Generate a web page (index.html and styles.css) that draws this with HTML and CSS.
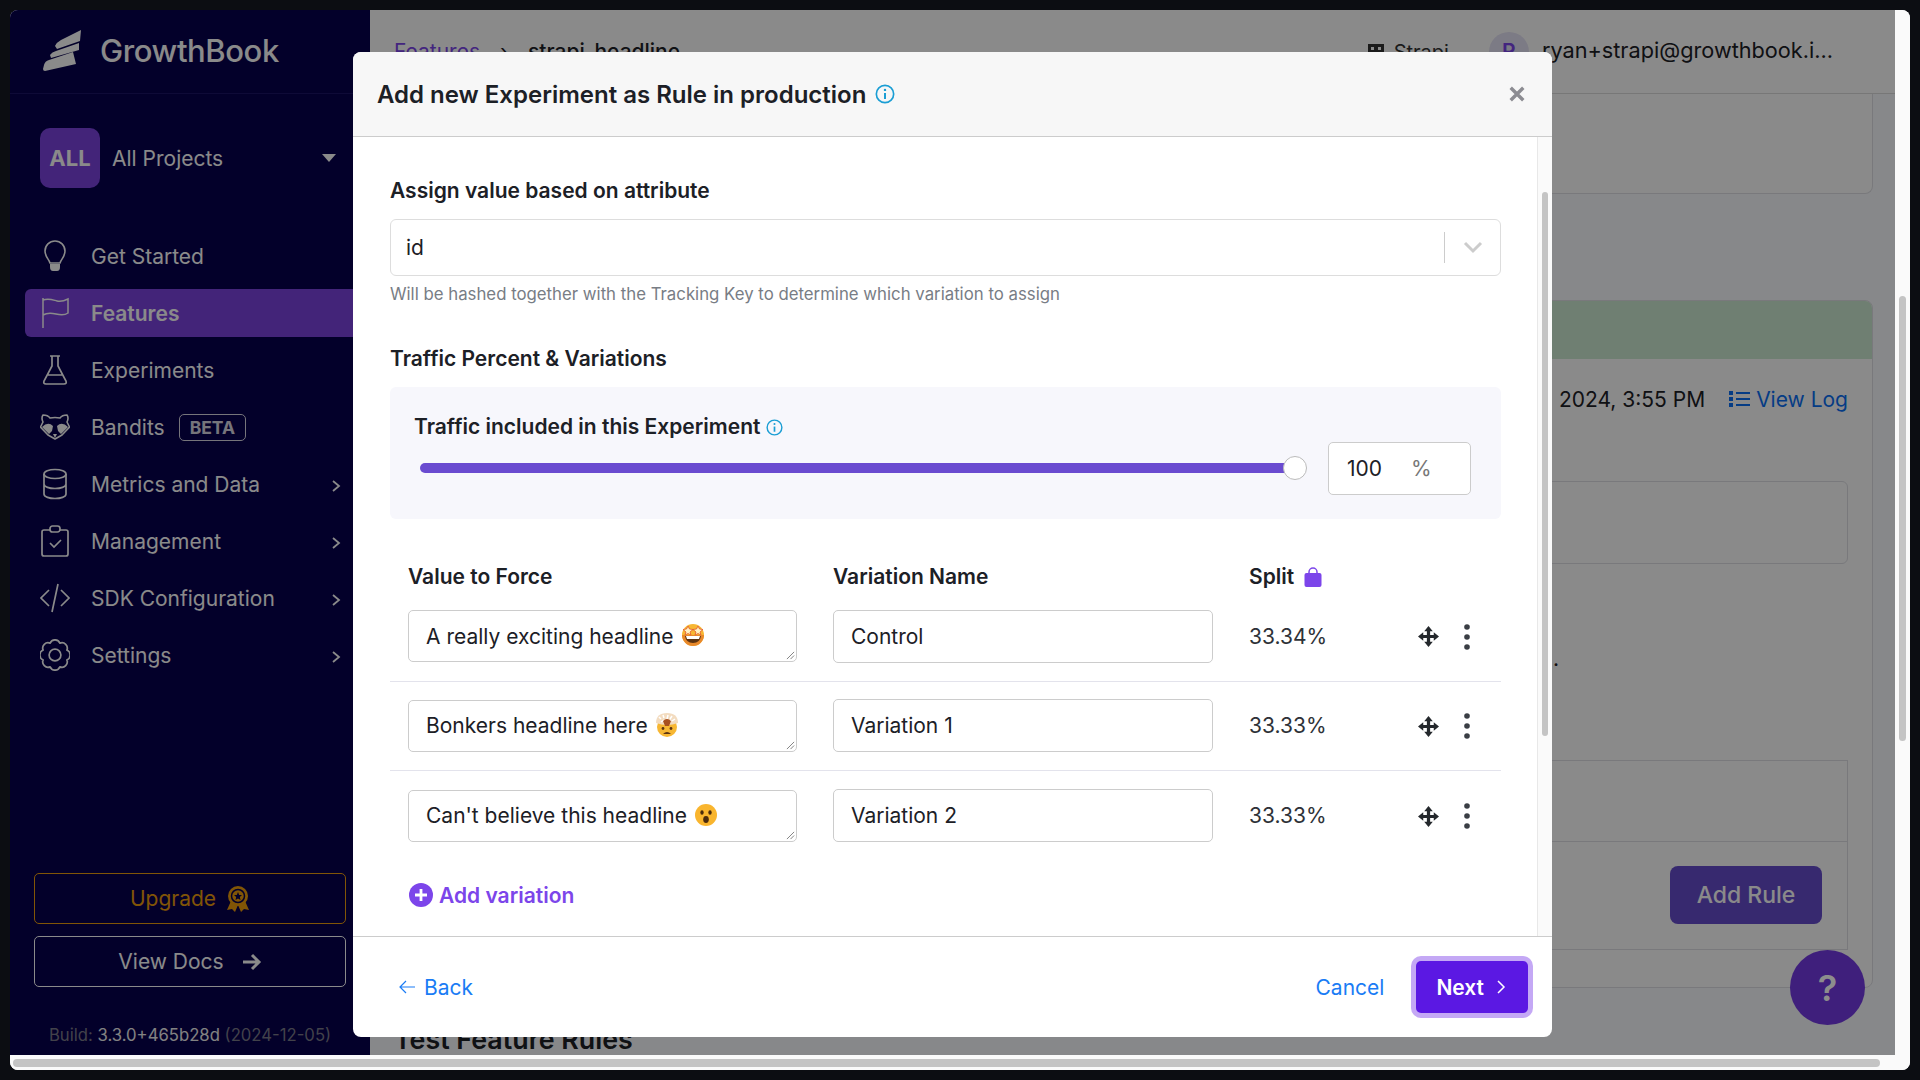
FILE: index.html
```html
<!DOCTYPE html>
<html>
	<head>
		<meta charset="UTF-8">
		<title>Features - GrowthBook</title>
		<link rel="stylesheet" href="styles.css">
	</head>
	<body>
		<div class="window">
			<div class="viewport">
				<aside class="sidebar">
					<div class="logo">
						<svg width="40" height="42" viewBox="0 0 40 42"><path d="M38 0 L37 11 L14 19 L12 16 Q14 12 18 10 Z M36 13 L36 20 L8 28 L7 25 Q9 22 13 21 Z M30 22 L33 34 L2 41 Q0 41 0 39 L1 35 Q2 31 6 30 Z" fill="currentColor"/></svg>
						<span>GrowthBook</span>
					</div>
					<div class="project">
						<div class="project-badge">ALL</div>
						<span>All Projects</span>
						<i class="caret"></i>
					</div>
					<nav class="nav">
						<a class="nav-item">
							<svg class="nav-icon" viewBox="0 0 28 32"><path d="M9 23 C8 19 4 17 4 11 A10 10 0 0 1 24 11 C24 17 20 19 19 23 Z" fill="none" stroke="currentColor" stroke-width="1.6"/><path d="M9 24 H19 V27 Q19 31 16 31 H12 Q9 31 9 27 Z" fill="currentColor"/></svg>
							<span>Get Started</span>
						</a>
						<a class="nav-item active">
							<svg class="nav-icon" viewBox="0 0 28 32"><path d="M2 1 V31 M2 3 C8 1 12 3 16 4 C20 5 23 4 27 2 V16 C23 19 19 18 15 17 C11 16 7 15 2 18" fill="none" stroke="currentColor" stroke-width="1.5"/></svg>
							<span>Features</span>
						</a>
						<a class="nav-item">
							<svg class="nav-icon" viewBox="0 0 28 32"><path d="M9 2 H19 M11 2 V12 L3 27 Q2 30 5 30 H23 Q26 30 25 27 L17 12 V2 M7 21 H21" fill="none" stroke="currentColor" stroke-width="1.7"/></svg>
							<span>Experiments</span>
						</a>
						<a class="nav-item">
							<svg class="nav-icon" viewBox="0 0 30 26"><path d="M3 1 Q8 1 10 4 Q15 3 20 4 Q22 1 27 1 Q29 4 27 8 L29.500 13 L22 21 L15 25 L8 21 L0.500 13 L3 8 Q1 4 3 1 Z" fill="none" stroke="currentColor" stroke-width="1.600" stroke-linejoin="round"/><path d="M2 13 Q8 7 13 12 L12 17 L9 20 Z M28 13 Q22 7 17 12 L18 17 L21 20 Z M13 20 H17 L15 24 Z" fill="currentColor"/></svg>
							<span>Bandits</span>
							<em class="beta">BETA</em>
						</a>
						<a class="nav-item">
							<svg class="nav-icon" viewBox="0 0 28 32"><ellipse cx="14" cy="6" rx="11" ry="4.5" fill="none" stroke="currentColor" stroke-width="1.7"/><path d="M3 6 V26 C3 32 25 32 25 26 V6 M3 16 C3 22 25 22 25 16" fill="none" stroke="currentColor" stroke-width="1.7"/></svg>
							<span>Metrics and Data</span>
							<svg class="nav-chevron" viewBox="0 0 10 14"><path d="M2 2 L8 7 L2 12" fill="none" stroke="currentColor" stroke-width="1.8"/></svg>
						</a>
						<a class="nav-item">
							<svg class="nav-icon" viewBox="0 0 28 32"><path d="M9 5 H3 Q1 5 1 7 V29 Q1 31 3 31 H25 Q27 31 27 29 V7 Q27 5 25 5 H19" fill="none" stroke="currentColor" stroke-width="1.7"/><rect x="9" y="1" width="10" height="6" rx="2.5" fill="none" stroke="currentColor" stroke-width="1.7"/><path d="M9 18 L13 22 L20 15" fill="none" stroke="currentColor" stroke-width="1.7"/></svg>
							<span>Management</span>
							<svg class="nav-chevron" viewBox="0 0 10 14"><path d="M2 2 L8 7 L2 12" fill="none" stroke="currentColor" stroke-width="1.8"/></svg>
						</a>
						<a class="nav-item">
							<svg class="nav-icon" viewBox="0 0 30 28"><path d="M9 6 L1 14 L9 22 M21 6 L29 14 L21 22 M18 0 L12 28" fill="none" stroke="currentColor" stroke-width="1.7"/></svg>
							<span>SDK Configuration</span>
							<svg class="nav-chevron" viewBox="0 0 10 14"><path d="M2 2 L8 7 L2 12" fill="none" stroke="currentColor" stroke-width="1.8"/></svg>
						</a>
						<a class="nav-item">
							<svg class="nav-icon" viewBox="0 0 28 28"><circle cx="14" cy="14" r="5.5" fill="none" stroke="currentColor" stroke-width="1.6"/><path d="M9.400 2.900 A5 5 0 0 1 18.600 2.900 A5 5 0 0 1 25.100 9.400 A5 5 0 0 1 25.100 18.600 A5 5 0 0 1 18.600 25.100 A5 5 0 0 1 9.400 25.100 A5 5 0 0 1 2.900 18.600 A5 5 0 0 1 2.900 9.400 A5 5 0 0 1 9.400 2.900 Z" fill="none" stroke="currentColor" stroke-width="1.6" stroke-linejoin="round"/></svg>
							<span>Settings</span>
							<svg class="nav-chevron" viewBox="0 0 10 14"><path d="M2 2 L8 7 L2 12" fill="none" stroke="currentColor" stroke-width="1.8"/></svg>
						</a>
					</nav>
					<div class="side-bottom">
						<a class="side-btn upgrade">
							Upgrade
							<svg width="24" height="28" viewBox="0 0 24 28"><path d="M5 16 L1 25 L6 24 L9 27 L12 20 L15 27 L18 24 L23 25 L19 16 Z" fill="currentColor"/><circle cx="12" cy="11" r="10" fill="currentColor"/><circle cx="12" cy="11" r="6.500" fill="none" stroke="#07004e" stroke-width="1.500"/><path d="M12 7 L13.200 10 L16 10 L13.800 12 L14.500 15 L12 13.500 L9.500 15 L10.200 12 L8 10 L10.800 10 Z" fill="#07004e"/></svg>
						</a>
						<a class="side-btn docs">
							View Docs
							<svg width="20" height="18" viewBox="0 0 20 18"><path d="M1 9 H17 M10 2 L17 9 L10 16" fill="none" stroke="currentColor" stroke-width="3"/></svg>
						</a>
						<div class="build">Build: <b>3.3.0+465b28d</b> (2024-12-05)</div>
					</div>
				</aside>

				<main class="content">
					<header class="topbar">
						<div class="crumbs"><a>Features</a><span class="crumb-sep">&rsaquo;</span><strong>strapi-headline</strong></div>
						<div class="org">
							<svg width="16" height="16" viewBox="0 0 16 16"><path d="M0 0 H16 V16 H0 Z M3 3 V6 H6 V3 Z M10 3 V6 H13 V3 Z M3 9 V12 H6 V9 Z M10 9 V12 H13 V9 Z" fill="currentColor" fill-rule="evenodd"/></svg>
							Strapi
						</div>
						<div class="avatar">R</div>
						<div class="user">ryan+strapi@growthbook.i...</div>
					</header>
					<div class="page-body">
						<section class="card card-top"></section>
						<section class="card card-env">
							<div class="env-head"></div>
							<div class="env-body">
								<div class="log-row">
									<span>2024, 3:55 PM</span>
									<a class="view-log">
										<svg width="21" height="18" viewBox="0 0 21 18"><path d="M0 1 H4 V5 H0 Z M0 7 H4 V11 H0 Z M0 13 H4 V17 H0 Z M7 2 H21 V4 H7 Z M7 8 H21 V10 H7 Z M7 14 H21 V16 H7 Z" fill="currentColor"/></svg>
										View Log
									</a>
								</div>
								<div class="env-box"></div>
								<div class="stray-dot">.</div>
								<div class="rules-box">
									<div class="rules-top"></div>
									<div class="rules-foot"><a class="add-rule">Add Rule</a></div>
								</div>
							</div>
						</section>
						<h2 class="test-title">Test Feature Rules</h2>
					</div>
				</main>

				<div class="backdrop"></div>
				<a class="help-fab">?</a>

				<div class="modal">
					<div class="modal-head">
						<h4>Add new Experiment as Rule in production</h4>
						<svg class="info big" viewBox="0 0 18 18"><circle cx="9" cy="9" r="7.800" fill="none" stroke="currentColor" stroke-width="1.500"/><circle cx="9" cy="5.300" r="1.100" fill="currentColor"/><path d="M9 8 V13.500" stroke="currentColor" stroke-width="1.800"/></svg>
						<svg class="modal-close" viewBox="0 0 14 14"><path d="M1.500 1.500 L12.500 12.500 M12.500 1.500 L1.500 12.500" stroke="currentColor" stroke-width="3"/></svg>
					</div>
					<div class="modal-scroll">
						<div class="modal-body">
							<label class="field-label">Assign value based on attribute</label>
							<div class="select">
								<span>id</span>
								<i class="select-sep"></i>
								<svg width="20" height="13" viewBox="0 0 20 13"><path d="M2 2 L10 10 L18 2" fill="none" stroke="#ccc" stroke-width="3"/></svg>
							</div>
							<p class="hint">Will be hashed together with the Tracking Key to determine which variation to assign</p>

							<label class="field-label traffic-label">Traffic Percent &amp; Variations</label>
							<div class="traffic">
								<div class="traffic-title">
									Traffic included in this Experiment
									<svg class="info" viewBox="0 0 18 18"><circle cx="9" cy="9" r="7.800" fill="none" stroke="currentColor" stroke-width="1.500"/><circle cx="9" cy="5.300" r="1.100" fill="currentColor"/><path d="M9 8 V13.500" stroke="currentColor" stroke-width="1.800"/></svg>
								</div>
								<div class="traffic-row">
									<div class="slider"><i class="slider-thumb"></i></div>
									<div class="percent-input"><span>100</span><em>%</em></div>
								</div>
							</div>

							<div class="var-head var-grid">
								<span>Value to Force</span>
								<span>Variation Name</span>
								<span class="split-head">Split
									<svg width="18" height="20" viewBox="0 0 18 20"><path d="M5 8 V5 A4 4 0 0 1 13 5 V8" fill="none" stroke="#7c45ea" stroke-width="1.500"/><rect x="0.500" y="6" width="17" height="14" rx="2" fill="#7c45ea"/></svg>
								</span>
							</div>

							<div class="var-row var-grid">
								<div class="text-box">A really exciting headline
									<svg class="emoji" viewBox="0 0 24 24"><circle cx="12" cy="12" r="11" fill="#f7b733"/><path d="M1 12 A11 11 0 0 0 23 12 Z" fill="#e8892b"/><path d="M4 13 H20 Q19 20 12 20 Q5 20 4 13 Z" fill="#5c3310"/><path d="M5 13 H19 L18 16 H6 Z" fill="#fff"/><path d="M7 3 L8.500 6 L12 6.500 L9 9 L10 12 L7 10.500 L4 12 L5 9 L2 6.500 L5.500 6 Z M17 3 L18.500 6 L22 6.500 L19 9 L20 12 L17 10.500 L14 12 L15 9 L12 6.500 L15.500 6 Z" fill="#fff3c4" stroke="#e2572b" stroke-width=".8"/></svg>
									<svg class="grip" viewBox="0 0 10 10"><path d="M9 1 L1 9 M9 5 L5 9" stroke="#777" stroke-width="1"/></svg>
								</div>
								<div class="text-input">Control</div>
								<div class="split-val">33.34%</div>
								<div class="var-actions">
									<svg class="move" viewBox="0 0 22 22"><path d="M11 0 L15.500 5.500 H12.700 V9.300 H16.500 V6.500 L22 11 L16.500 15.500 V12.700 H12.700 V16.500 H15.500 L11 22 L6.500 16.500 H9.300 V12.700 H5.500 V15.500 L0 11 L5.500 6.500 V9.300 H9.300 V5.500 H6.500 Z" fill="currentColor"/></svg>
									<svg class="kebab" viewBox="0 0 6 26"><circle cx="3" cy="3" r="2.800"/><circle cx="3" cy="13" r="2.800"/><circle cx="3" cy="23" r="2.800"/></svg>
								</div>
							</div>
							<div class="var-row var-grid">
								<div class="text-box">Bonkers headline here
									<svg class="emoji" viewBox="0 0 24 24"><circle cx="12" cy="14" r="10" fill="#f7b733"/><path d="M1 10 Q1 0 12 0 Q23 0 23 10 Q12 14 1 10 Z" fill="#f3dcc0"/><path d="M4 4 L6 6 M8 2 L9 5 M13 2 L12 6 M17 3 L15 6 M20 6 L17 8 M6 9 L9 7 M14 9 L16 7" stroke="#fff" stroke-width="1.500"/><path d="M8 8 Q12 4 16 8 L14 13 H10 Z" fill="#a8501f"/><circle cx="8" cy="15.500" r="1.400" fill="#5c3310"/><circle cx="16" cy="15.500" r="1.400" fill="#5c3310"/><path d="M8 21 Q12 17 16 21 Z" fill="#5c3310"/></svg>
									<svg class="grip" viewBox="0 0 10 10"><path d="M9 1 L1 9 M9 5 L5 9" stroke="#777" stroke-width="1"/></svg>
								</div>
								<div class="text-input">Variation 1</div>
								<div class="split-val">33.33%</div>
								<div class="var-actions">
									<svg class="move" viewBox="0 0 22 22"><path d="M11 0 L15.500 5.500 H12.700 V9.300 H16.500 V6.500 L22 11 L16.500 15.500 V12.700 H12.700 V16.500 H15.500 L11 22 L6.500 16.500 H9.300 V12.700 H5.500 V15.500 L0 11 L5.500 6.500 V9.300 H9.300 V5.500 H6.500 Z" fill="currentColor"/></svg>
									<svg class="kebab" viewBox="0 0 6 26"><circle cx="3" cy="3" r="2.800"/><circle cx="3" cy="13" r="2.800"/><circle cx="3" cy="23" r="2.800"/></svg>
								</div>
							</div>
							<div class="var-row var-grid last">
								<div class="text-box">Can't believe this headline
									<svg class="emoji" viewBox="0 0 24 24"><circle cx="12" cy="12" r="11" fill="#f9b52e"/><ellipse cx="8" cy="9.500" rx="1.700" ry="2.200" fill="#4a2a0c"/><ellipse cx="16" cy="9.500" rx="1.700" ry="2.200" fill="#4a2a0c"/><ellipse cx="12" cy="16.500" rx="2.800" ry="3.400" fill="#4a2a0c"/></svg>
									<svg class="grip" viewBox="0 0 10 10"><path d="M9 1 L1 9 M9 5 L5 9" stroke="#777" stroke-width="1"/></svg>
								</div>
								<div class="text-input">Variation 2</div>
								<div class="split-val">33.33%</div>
								<div class="var-actions">
									<svg class="move" viewBox="0 0 22 22"><path d="M11 0 L15.500 5.500 H12.700 V9.300 H16.500 V6.500 L22 11 L16.500 15.500 V12.700 H12.700 V16.500 H15.500 L11 22 L6.500 16.500 H9.300 V12.700 H5.500 V15.500 L0 11 L5.500 6.500 V9.300 H9.300 V5.500 H6.500 Z" fill="currentColor"/></svg>
									<svg class="kebab" viewBox="0 0 6 26"><circle cx="3" cy="3" r="2.800"/><circle cx="3" cy="13" r="2.800"/><circle cx="3" cy="23" r="2.800"/></svg>
								</div>
							</div>
							<a class="add-variation">
								<svg width="24" height="24" viewBox="0 0 24 24"><circle cx="12" cy="12" r="12" fill="#7c45ea"/><path d="M12 6 V18 M6 12 H18" stroke="#fff" stroke-width="2.800"/></svg>
								Add variation
							</a>
						</div>
						<div class="modal-track"><i></i></div>
					</div>
					<div class="modal-foot">
						<a class="back">
							<svg width="16" height="14" viewBox="0 0 16 14"><path d="M7 1 L1 7 L7 13 M1 7 H16" fill="none" stroke="currentColor" stroke-width="1.200"/></svg>
							Back
						</a>
						<a class="cancel">Cancel</a>
						<a class="next">Next
							<svg width="10" height="16" viewBox="0 0 10 16"><path d="M2 2 L8 8 L2 14" fill="none" stroke="currentColor" stroke-width="1.500"/></svg>
						</a>
					</div>
				</div>
			</div>
			<div class="vscroll"><i></i></div>
			<div class="hscroll"><i></i></div>
			<div class="corner"></div>
		</div>
	</body>
</html>
```

FILE: styles.css
```css
*{
	box-sizing: border-box;
}
html,body{
	margin: 0;
	height: 100%;
}
body{
	width: 1920px;
	height: 1080px;
	padding: 10px;
	background: #0c0d12;
	font-family: Inter, "Liberation Sans", sans-serif;
	font-size: 21px;
	color: #1c2026;
	overflow: hidden;
}
a{
	cursor: pointer;
}
.window{
	display: grid;
	grid-template-columns: 1fr 15px;
	grid-template-rows: 1fr 15px;
	height: 100%;
	background: #fafafa;
	border-radius: 8px;
	overflow: hidden;
}
.viewport{
	position: relative;
	display: flex;
	overflow: hidden;
}

/* sidebar */
.sidebar{
	display: flex;
	flex-direction: column;
	flex: 0 0 360px;
	background: #07004e;
	color: #fff;
}
.logo{
	display: flex;
	align-items: center;
	gap: 17px;
	height: 84px;
	padding: 0 0 2px 33px;
	border-bottom: 1px solid #1a1466;
	font-size: 31px;
	font-weight: 500;
	letter-spacing: -.4px;
}
.project{
	display: flex;
	align-items: center;
	gap: 12px;
	padding: 34px 20px 0 30px;
}
.project-badge{
	display: flex;
	align-items: center;
	justify-content: center;
	width: 60px;
	height: 60px;
	border-radius: 10px;
	background: #7c43e0;
	font-size: 22px;
	font-weight: 700;
}
.caret{
	margin-left: auto;
	margin-right: 14px;
	border: 7px solid transparent;
	border-top: 8px solid #fff;
	border-bottom: 0;
}
.nav{
	display: flex;
	flex-direction: column;
	gap: 9px;
	margin-top: 44px;
	padding-left: 15px;
}
.nav-item{
	display: flex;
	align-items: center;
	gap: 21px;
	height: 48px;
	padding: 0 29px 0 15px;
	border-radius: 6px 0 0 6px;
}
.nav-item.active{
	background: #7c43e0;
	font-weight: 600;
}
.nav-icon{
	flex: 0 0 auto;
	width: 30px;
	height: 32px;
}
.nav-chevron{
	width: 10px;
	height: 14px;
	margin-left: auto;
	margin-top: 3px;
}
.beta{
	margin-left: -7px;
	padding: 2px 10px;
	border: 1px solid #fff;
	border-radius: 5px;
	font-style: normal;
	font-size: 17.500px;
	font-weight: 700;
	opacity: .85;
}
.side-bottom{
	display: flex;
	flex-direction: column;
	margin-top: auto;
	padding: 0 24px 0 24px;
}
.side-btn{
	display: flex;
	align-items: center;
	justify-content: center;
	gap: 10px;
	height: 51px;
	border: 1px solid currentColor;
	border-radius: 5px;
	margin-top: 12px;
}
.upgrade{
	color: #ee9d0c;
}
.docs{
	gap: 18px;
}
.build{
	margin: 38px 0 10px;
	text-align: center;
	font-size: 16.700px;
	color: #7a7a8a;
	white-space: nowrap;
}
.build b{
	font-weight: 400;
	color: #f0f0f0;
}

/* page under the dialog */
.content{
	flex: 1;
	min-width: 0;
	background: #fafbff;
}
.topbar{
	display: flex;
	align-items: center;
	height: 84px;
	padding: 0 62px 0 24px;
	background: #fff;
	border-bottom: 1px solid #ddd;
}
.crumbs{
	display: flex;
	align-items: center;
	gap: 20px;
	margin-right: auto;
}
.crumbs a{
	color: #7c45ea;
}
.crumbs strong{
	font-weight: 500;
}
.org{
	display: flex;
	align-items: center;
	gap: 10px;
	margin-right: 40px;
	font-size: 20px;
	color: #333;
}
.avatar{
	display: flex;
	align-items: center;
	justify-content: center;
	width: 40px;
	height: 40px;
	margin-right: 13px;
	border-radius: 50%;
	background: #e6e3f5;
	color: #7c45ea;
	font-weight: 600;
}
.user{
	margin-bottom: 4px;
	font-size: 21.700px;
	white-space: nowrap;
}
.page-body{
	padding: 0 22px 0 24px;
}
.card{
	background: #fff;
	border: 1px solid #dfe0e5;
	border-radius: 8px;
}
.card-top{
	height: 100px;
	border-top: 0;
	border-radius: 0 0 8px 8px;
}
.card-env{
	height: 688px;
	margin-top: 106px;
	overflow: hidden;
}
.env-head{
	height: 58px;
	background: #cdebd3;
}
.env-body{
	padding: 0 24px;
}
.log-row{
	display: flex;
	align-items: center;
	justify-content: flex-end;
	gap: 24px;
	height: 80px;
}
.view-log{
	display: flex;
	align-items: center;
	gap: 6px;
	color: #0a6ff5;
}
.env-box{
	height: 83px;
	margin-top: 42px;
	border: 1px solid #dfe0e5;
	border-radius: 6px;
}
.stray-dot{
	height: 196px;
	padding: 84px 0 0 1134px;
	line-height: 1;
}
.rules-box{
	height: 190px;
	border: 1px solid #dfe0e5;
}
.rules-top{
	height: 81px;
	border-bottom: 1px solid #dfe0e5;
}
.rules-foot{
	display: flex;
	justify-content: flex-end;
	padding: 24px 25px 0 0;
}
.add-rule{
	display: flex;
	align-items: center;
	justify-content: center;
	width: 152px;
	height: 58px;
	border-radius: 8px;
	background: #664ccd;
	color: #fff;
	font-size: 23px;
	font-weight: 500;
}
.test-title{
	margin: 35px 0 0;
	font-size: 26.800px;
	font-weight: 600;
}
.backdrop{
	position: absolute;
	inset: 0;
	background: rgba(0,0,0,.46);
}
.help-fab{
	position: absolute;
	left: 1780px;
	top: 940px;
	display: flex;
	align-items: center;
	justify-content: center;
	width: 75px;
	height: 75px;
	border-radius: 50%;
	background: #3f1f7c;
	color: #8d8d8d;
	font-size: 36px;
	font-weight: 600;
}

/* dialog */
.modal{
	position: absolute;
	left: 343px;
	top: 42px;
	display: flex;
	flex-direction: column;
	width: 1199px;
	height: 985px;
	background: #fff;
	border-radius: 8px;
	overflow: hidden;
}
.modal-head{
	display: flex;
	align-items: center;
	height: 85px;
	padding: 0 27px 0 24px;
	background: #f7f7f7;
	border-bottom: 1px solid #ccc;
}
.modal-head h4{
	margin: 0;
	font-size: 24px;
	font-weight: 600;
}
.info{
	width: 17px;
	height: 17px;
	margin-left: 6px;
	color: #1b9ed4;
}
.info.big{
	width: 20px;
	height: 20px;
	margin-left: 9px;
}
.modal-close{
	width: 16px;
	height: 16px;
	margin-left: auto;
	color: #8c8c92;
}
.modal-scroll{
	display: flex;
	flex: 1;
	min-height: 0;
}
.modal-body{
	flex: 1;
	padding: 39px 36px 0 37px;
}
.modal-track{
	flex: 0 0 15px;
	padding: 55px 4px 0 4px;
	background: #fafafa;
	border-left: 1px solid #e8e8e8;
}
.modal-track i{
	display: block;
	height: 544px;
	background: #c4c4c4;
	border-radius: 4px;
}
.field-label{
	display: block;
	font-weight: 600;
	line-height: 30px;
}
.select{
	display: flex;
	align-items: center;
	height: 57px;
	margin-top: 13px;
	padding: 0 17px 0 15px;
	border: 1px solid #ddd;
	border-radius: 6px;
}
.select-sep{
	width: 1px;
	height: 31px;
	margin-left: auto;
	margin-right: 18px;
	background: #ccc;
}
.hint{
	margin: 8px 0 0;
	font-size: 16.800px;
	line-height: 20px;
	color: #787d85;
}
.traffic-label{
	margin-top: 40px;
}
.traffic{
	height: 132px;
	margin-top: 13px;
	padding: 25px 30px 0 24px;
	background: #f7f7fc;
	border-radius: 6px;
}
.traffic-title{
	display: flex;
	align-items: center;
	font-weight: 600;
	line-height: 30px;
}
.traffic-row{
	display: flex;
	align-items: center;
}
.slider{
	position: relative;
	flex: 1;
	height: 10px;
	margin: 0 33px 2px 6px;
	border-radius: 5px;
	background: #6a4bd0;
}
.slider-thumb{
	position: absolute;
	right: -12px;
	top: -7px;
	width: 24px;
	height: 24px;
	border-radius: 50%;
	background: #fff;
	border: 1px solid #bbb;
}
.percent-input{
	display: flex;
	flex: 0 0 143px;
	align-items: center;
	gap: 29px;
	height: 53px;
	padding-left: 18px;
	background: #fff;
	border: 1px solid #ccc;
	border-radius: 5px;
}
.percent-input em{
	font-style: normal;
	color: #777;
}
.var-grid{
	display: grid;
	grid-template-columns: 389px 380px 1fr;
	column-gap: 36px;
}
.var-head{
	padding: 43px 0 0 18px;
	font-weight: 600;
	line-height: 30px;
}
.split-head{
	display: flex;
	align-items: center;
	gap: 10px;
}
.var-row{
	position: relative;
	align-items: center;
	height: 89.500px;
	padding: 0 18px;
	border-bottom: 1px solid #e3e3ec;
	grid-template-columns: 389px 380px 1fr 80px;
	column-gap: 36px;
}
.var-row.last{
	border-bottom: 0;
}
.text-box{
	position: relative;
	display: flex;
	align-items: center;
	gap: 7px;
	height: 52px;
	padding: 0 17px;
	border: 1px solid #ccc;
	border-radius: 5px;
}
.emoji{
	width: 24px;
	height: 24px;
	margin-top: -2px;
}
.grip{
	position: absolute;
	right: 1px;
	bottom: 1px;
	width: 9px;
	height: 9px;
}
.text-input{
	display: flex;
	align-items: center;
	height: 53px;
	padding: 0 17px;
	border: 1px solid #ccc;
	border-radius: 5px;
}
.split-val{
	color: #2e3238;
}
.var-actions{
	display: flex;
	align-items: center;
	gap: 25px;
	margin: 1px 0 0 15px;
	color: #24282c;
}
.move{
	width: 21px;
	height: 21px;
	flex: 0 0 auto;
}
.kebab{
	width: 6px;
	height: 26px;
	flex: 0 0 auto;
	fill: #3a3e44;
}
.add-variation{
	display: inline-flex;
	align-items: center;
	gap: 6px;
	margin: 22px 0 0 19px;
	color: #7c45ea;
	font-weight: 600;
}
.modal-foot{
	display: flex;
	align-items: center;
	height: 101px;
	padding: 0 24px 0 46px;
	border-top: 1px solid #ccc;
	color: #1a7cf5;
}
.back{
	display: flex;
	align-items: center;
	gap: 9px;
	margin-right: auto;
}
.next{
	display: flex;
	align-items: center;
	gap: 12px;
	height: 52px;
	margin-left: 32px;
	padding: 0 22px 0 20px;
	background: #5b18e3;
	color: #fff;
	font-weight: 600;
	border-radius: 5px;
	box-shadow: 0 0 0 5px #c4a8f5;
}

/* window scrollbars */
.vscroll{
	padding: 286px 4px 0 4px;
	background: #fafafa;
}
.vscroll i{
	display: block;
	height: 445px;
	background: #c4c4c4;
	border-radius: 4px;
}
.hscroll{
	padding: 4px 0 3px 3px;
	background: #fafafa;
}
.hscroll i{
	display: block;
	height: 8px;
	margin-right: 15px;
	background: #c4c4c4;
	border-radius: 5px;
}
.corner{
	background: #fafafa;
}
```
